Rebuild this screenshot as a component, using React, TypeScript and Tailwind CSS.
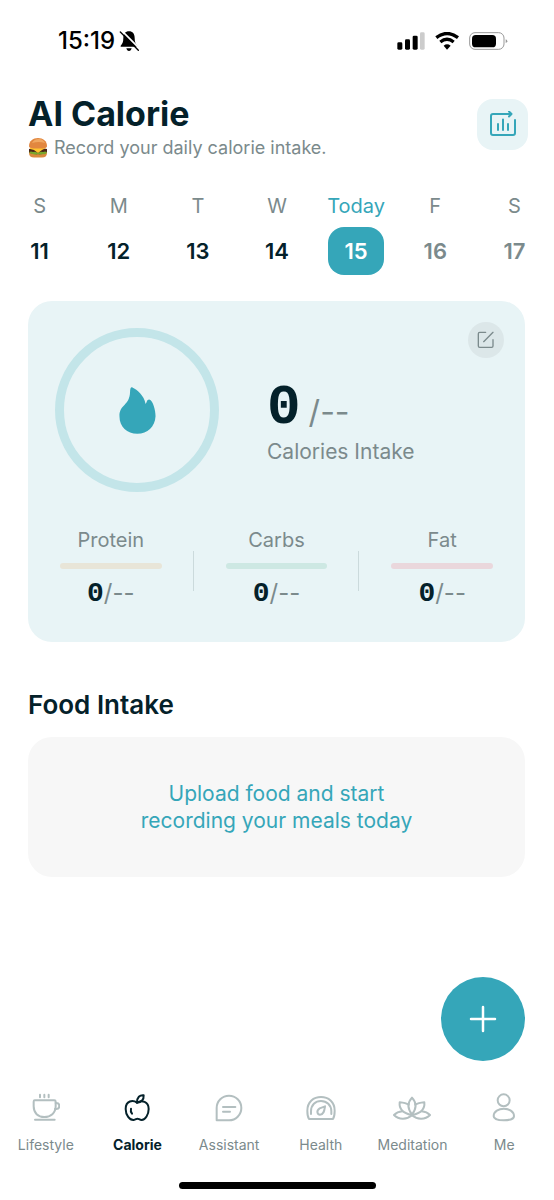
import { useState } from 'react'
import type { ReactNode } from 'react'

interface Day {
  label: string
  date: number
  state: 'past' | 'today' | 'future'
}

const days: Day[] = [
  { label: 'S', date: 11, state: 'past' },
  { label: 'M', date: 12, state: 'past' },
  { label: 'T', date: 13, state: 'past' },
  { label: 'W', date: 14, state: 'past' },
  { label: 'Today', date: 15, state: 'today' },
  { label: 'F', date: 16, state: 'future' },
  { label: 'S', date: 17, state: 'future' },
]

const macros = [
  { name: 'Protein', bar: 'bg-[#e8e5d8]' },
  { name: 'Carbs', bar: 'bg-[#cde8e3]' },
  { name: 'Fat', bar: 'bg-[#ead7dc]' },
]

const tabs: { name: string; icon: ReactNode }[] = [
  {
    name: 'Lifestyle',
    icon: (
      <svg width="28" height="30" viewBox="97 40 84 90">
        <path d="M121 45v8M134 45v8M147 45v8" />
        <path d="M105 62H164q4 0 4 4V80C168 100 153 112 134 112S102 100 102 80V66q0-4 3-4z" />
        <path d="M168 70h2a9 9 0 0 1 0 18h-4M106 120H165" />
      </svg>
    ),
  },
  {
    name: 'Calorie',
    icon: (
      <svg width="28" height="30" viewBox="370 40 84 90">
        <path d="M412 69C400 60 378 62 378 88C378 106 390 122 402 121C408 120 410 117 413 117C417 117 420 121 426 121C437 121 447 104 447 88C447 66 426 60 412 69Z" />
        <path d="M412 69C412 52 420 46 432 47C433 60 425 68 412 69M394 87C392 94 394 98 397 102" />
      </svg>
    ),
  },
  {
    name: 'Assistant',
    icon: (
      <svg width="28" height="30" viewBox="645 40 84 90">
        <path d="M650 122V85a37 37 0 1 1 37 37z" />
        <path d="M669 82H706M669 96H690" />
      </svg>
    ),
  },
  {
    name: 'Health',
    icon: (
      <svg width="30" height="30" viewBox="77 40 90 90">
        <path d="M86 118H158q5-8 5-25C163 66 144 52 122 52S81 66 81 93q0 17 5 25z" />
        <path d="M92 103V95C92 76 105 64 122 64S153 76 153 95V103" />
        <path d="M134 80L118 86C106 94 112 105 119 105C131 105 132 92 134 80z" />
      </svg>
    ),
  },
  {
    name: 'Meditation',
    icon: (
      <svg width="38" height="30" viewBox="340 40 114 90">
        <path d="M397 105C382 85 384 68 397 54C410 68 412 85 397 105z" />
        <path d="M387 75C379 70 370 69 360 68C358 86 368 100 396 106M407 75C415 70 424 69 434 68C436 86 426 100 398 106" />
        <path d="M368 95C358 96 350 99 343 106C358 122 382 120 397 107C412 120 436 122 451 106C444 99 436 96 426 95" />
      </svg>
    ),
  },
  {
    name: 'Me',
    icon: (
      <svg width="28" height="30" viewBox="630 40 84 90">
        <circle cx="671" cy="62" r="18" />
        <path d="M641 110C641 80 702 80 702 110C702 126 641 126 641 110z" />
      </svg>
    ),
  },
]

const dayColors = {
  past: 'text-[#04212a]',
  today: 'bg-[#35a6b9] text-white',
  future: 'text-[#7b8a8c]',
}

function StatusBar() {
  return (
    <div className="flex h-[82px] items-center justify-between pr-[46px] pl-[58px] text-black">
      <div className="flex items-center gap-1">
        <span className="text-2xl font-medium">15:19</span>
        <svg width="20" height="22" viewBox="345 60 60 66">
          <path d="M375 64c11 0 17 8 17 20 0 12 3 18 8 23v3h-50v-3c5-5 8-11 8-23 0-12 6-20 17-20zM367 115h16c-1 5-4 8-8 8s-7-3-8-8z" />
          <path d="M353 62L408 117" stroke="#fff" strokeWidth="5" />
          <path d="M349 66L403 121" stroke="#000" strokeWidth="4" strokeLinecap="round" />
        </svg>
      </div>
      <div className="flex items-center gap-[10px]">
        <svg width="28" height="18" viewBox="50 37 84 54">
          <rect x="51" y="68" width="15" height="22" rx="4" />
          <rect x="74" y="59" width="15" height="31" rx="4" />
          <rect x="97" y="48" width="15" height="42" rx="4" />
          <rect x="119" y="38" width="14" height="52" rx="4" fill="#ccc" />
        </svg>
        <svg width="24" height="18" viewBox="164 37 72 54" fill="none" stroke="#000" strokeWidth="10">
          <path d="M168 54Q200 29 233 54M180 67Q200 51 220 67" />
          <path d="M190 78Q200 70 211 78L200 90z" fill="#000" stroke="none" />
        </svg>
        <svg width="39" height="18" viewBox="267 36 117 54">
          <rect x="269" y="38" width="103" height="50" rx="16" fill="none" stroke="#999" strokeWidth="3" />
          <rect x="276" y="45" width="72" height="37" rx="11" />
          <path d="M377 58q5 2 5 5.500t-5 5.500z" fill="#999" />
        </svg>
      </div>
    </div>
  )
}

function Burger() {
  return (
    <svg width="20" height="20" viewBox="0 0 20 20">
      <path d="M1 13h18v2c0 3-2 4.500-5 4.500H6c-3 0-5-1.500-5-4.500z" fill="#d98a3d" />
      <path d="M1 11q9-3 18 0v3q-2 2-4 1-2 2-5 1-3 1-5-1-3 1-4-1z" fill="#4a2418" />
      <path d="M1 14q2-1 4 0 2-1 5 1 3-2 5-1 2-1 4 0-1 3-4 2-2 1-5 0-3 1-5 0-3 0-4-2z" fill="#79a72c" />
      <path d="M2 10h16l-4 2-4 3-4-3-4-1z" fill="#ffc52e" />
      <path d="M1 8c0-5 4-8 9-8s9 3 9 8c0 2-2 2.500-9 2.500S1 10 1 8z" fill="#e2873f" />
      <path d="M4 5q2-4 7-4 4 0 6 4-6-2-13 0z" fill="#f0a862" />
    </svg>
  )
}

function IntakeCard() {
  return (
    <section className="mr-[29px] ml-7 mt-[26px] rounded-3xl bg-[#e8f4f6] pt-[27px] pb-8">
      <div className="flex items-start pr-[21px] pl-[27px]">
        <div className="flex size-[164px] shrink-0 items-center justify-center rounded-full border-9 border-[#c3e5e9]">
          <svg width="37" height="47" viewBox="296 274 111 142" fill="#35a6b9">
            <path d="M335 275C352 283 371 300 376 325C380 322 379 312 387 312C399 316 406 345 406 362C404 395 382 415 351 415C320 415 297 395 297 362C297 326 327 332 329 290C329 280 331 274 335 275Z" />
          </svg>
        </div>
        <div className="mt-[52px] ml-12 flex-1">
          <p className="flex items-baseline gap-2 leading-[56px]">
            <span className="font-['Liberation_Mono',monospace] text-[56px] leading-[56px] font-bold text-[#04212a]">0</span>
            <span className="text-[32px] text-[#7b8a8c]">/--</span>
          </p>
          <p className="-mt-1 text-[21px] leading-8 text-[#7b8a8c]">Calories Intake</p>
        </div>
        <button
          aria-label="Edit goal"
          className="-mt-[6px] flex size-9 shrink-0 items-center justify-center rounded-full bg-[#dce7e9]"
        >
          <svg width="18" height="18" viewBox="652 96 54 54" fill="none" stroke="#7b8a8c" strokeWidth="4" strokeLinecap="round">
            <path d="M678 100H660q-4 0-4 4V141q0 4 4 4h36q4 0 4-4V122M672 128L700 100" />
          </svg>
        </button>
      </div>
      <div className="mt-8 grid grid-cols-3">
        {macros.map((macro, i) => (
          <div key={macro.name} className="flex items-center">
            <div className="flex flex-1 flex-col items-center px-8">
              <span className="text-xl leading-8 text-[#7b8a8c]">{macro.name}</span>
              <div className={`mt-[7px] h-[6px] w-full rounded-full ${macro.bar}`} />
              <p className="mt-2 flex items-baseline text-2xl leading-8 text-[#7b8a8c]">
                <span className="font-['Liberation_Mono',monospace] text-[28px] leading-8 font-bold text-[#04212a]">0</span>
                <span>/--</span>
              </p>
            </div>
            {i < macros.length - 1 && <div className="mt-2 -ml-px h-10 w-px bg-[#cbdadc]" />}
          </div>
        ))}
      </div>
    </section>
  )
}

function App() {
  const [active, setActive] = useState('Calorie')

  return (
    <div className="flex min-h-screen flex-col bg-white font-['Inter',sans-serif]">
      <StatusBar />

      <header className="flex items-start justify-between pr-[26px] pl-7">
        <div className="pt-3">
          <h1 className="text-[34px] leading-10 font-bold text-[#04212a]">AI Calorie</h1>
          <p className="flex items-center gap-[6px] text-lg leading-7 text-[#7b8a8c]">
            <Burger />
            Record your daily calorie intake.
          </p>
        </div>
        <button
          aria-label="Statistics"
          className="mt-[17px] flex size-[51px] items-center justify-center rounded-2xl bg-[#e8f4f6]"
        >
          <svg width="28" height="28" viewBox="0 0 28 28" fill="none" stroke="#35a6b9" strokeWidth="2" strokeLinecap="round" strokeLinejoin="round">
            <path d="M22 3H4a2 2 0 0 0-2 2v17a2 2 0 0 0 2 2h20a2 2 0 0 0 2-2V9" />
            <path d="M20 0.500l2.500 2.500-2.500 2.500M9 13v6M14 8.500v10.500M19 13v6" />
          </svg>
        </button>
      </header>

      {/* Week */}
      <div className="mt-7 grid grid-cols-7">
        {days.map((day) => (
          <div key={day.date} className="flex flex-col items-center">
            <span className={`text-xl leading-8 ${day.state === 'today' ? 'text-[#35a6b9]' : 'text-[#7b8a8c]'}`}>
              {day.label}
            </span>
            <button
              className={`mt-[5px] h-12 w-14 rounded-2xl text-[22px] font-semibold ${dayColors[day.state]}`}
            >
              {day.date}
            </button>
          </div>
        ))}
      </div>

      <IntakeCard />

      <section className="mr-[29px] ml-7 mt-[45px]">
        <h2 className="text-[26px] leading-9 font-semibold text-[#04212a]">Food Intake</h2>
        <div className="mt-[14px] flex h-[140px] items-center justify-center rounded-3xl bg-[#f7f7f7]">
          <p className="text-center text-[21px] leading-[27px] text-[#35a6b9]">
            Upload food and start
            <br />
            recording your meals today
          </p>
        </div>
      </section>

      <button
        aria-label="Add food"
        className="mt-auto mr-[29px] flex size-[84px] items-center justify-center self-end rounded-full bg-[#35a6b9]"
      >
        <svg width="28" height="28" viewBox="0 0 28 28" stroke="#fff" strokeWidth="2.500" strokeLinecap="round">
          <path d="M14 2v24M2 14h24" />
        </svg>
      </button>

      <nav className="mt-8 grid grid-cols-6 pr-1">
        {tabs.map((tab) => (
          <button
            key={tab.name}
            onClick={() => setActive(tab.name)}
            className={`flex flex-col items-center gap-3 text-sm leading-5 ${
              tab.name === active ? 'font-bold text-[#04212a]' : 'text-[#7b8a8c]'
            }`}
          >
            <span
              className={`fill-none stroke-6 ${tab.name === active ? 'stroke-[#04212a]' : 'stroke-[#b3bfc0]'}`}
              style={{ strokeLinecap: 'round', strokeLinejoin: 'round' }}
            >
              {tab.icon}
            </span>
            {tab.name}
          </button>
        ))}
      </nav>
      <div className="mx-auto mt-[27px] mb-[11px] h-[7px] w-[197px] rounded-full bg-black" />
    </div>
  )
}

export default App
